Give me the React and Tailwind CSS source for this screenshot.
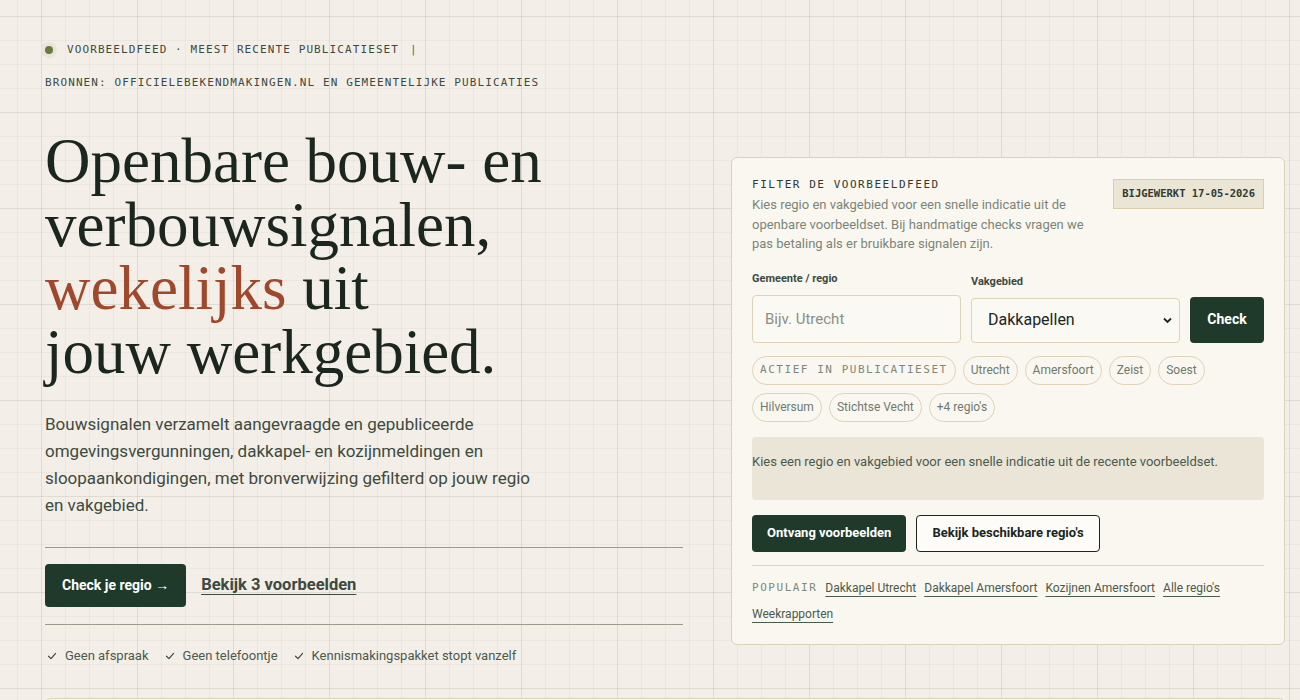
import React from "react";

const mono = "font-['DejaVu_Sans_Mono','Liberation_Mono',monospace]";
const sans = "font-['Roboto','Liberation_Sans',sans-serif]";
const serif = "font-['Liberation_Serif','Times_New_Roman',serif]";

function Check() {
  return (
    <svg width="10" height="10" viewBox="0 0 10 10" className="ml-[2px] shrink-0">
      <path d="M1.5 5.2 L4 7.6 L8.6 2.4" fill="none" stroke="#3b4a3e" strokeWidth="1.2" strokeLinecap="round" strokeLinejoin="round" />
    </svg>
  );
}

function Chip({ children, monoStyle }) {
  return (
    <span
      className={
        "inline-flex h-[29px] items-center rounded-full border border-[#ddd3b8] bg-[#faf7f0] " +
        (monoStyle
          ? `${mono} px-[7px] text-[11px] tracking-[0.14em] text-[#7d877c]`
          : `px-[7px] text-[12px] text-[#6f7a6e]`)
      }
    >
      {children}
    </span>
  );
}

function PopLink({ children }) {
  return (
    <a className="text-[12px] text-[#4a5a4c] underline decoration-[#4a5a4c] underline-offset-[4px]">{children}</a>
  );
}

export default function App() {
  return (
    <div
      className={`${sans} min-h-screen bg-[#f3efe8] bg-[linear-gradient(to_right,rgba(60,50,30,0.07)_1px,transparent_1px),linear-gradient(to_bottom,rgba(60,50,30,0.07)_1px,transparent_1px),linear-gradient(to_right,rgba(60,50,30,0.04)_1px,transparent_1px),linear-gradient(to_bottom,rgba(60,50,30,0.04)_1px,transparent_1px)] bg-[size:96px_96px,96px_96px,24px_24px,24px_24px] bg-[position:41px_16px,41px_16px,41px_16px,41px_16px]`}
    >
      <div className="pl-[45px] pr-[15px] pt-[42px]">
        {/* header */}
        <div className={`${mono} text-[11px] leading-[16px] tracking-[0.1em] text-[#3d4a3f]`}>
          <div className="flex items-center">
            <span className="h-2 w-2 rounded-full bg-[#6b7a3a] ring-4 ring-[#e7e6d8]" />
            <span className="ml-[14px]">VOORBEELDFEED · MEEST RECENTE PUBLICATIESET</span>
            <span className="ml-[11px] text-[#5a665c]">|</span>
          </div>
          <div className="mt-[17px]">BRONNEN: OFFICIELEBEKENDMAKINGEN.NL EN GEMEENTELIJKE PUBLICATIES</div>
        </div>

        {/* hero grid */}
        <div className="mt-[39px] grid grid-cols-[638px_554px] items-start gap-[48px]">
          <div>
            <h1 className={`${serif} text-[63px] font-normal leading-[63.5px] text-[#1a261e]`}>
              Openbare bouw- en
              <br />
              verbouwsignalen,
              <br />
              <span className="text-[#a0482c]">wekelijks</span> uit
              <br />
              jouw werkgebied.
            </h1>
            <p className="mt-[27px] max-w-[500px] text-[17px] leading-[27px] text-[#3d4a3f]">
              Bouwsignalen verzamelt aangevraagde en gepubliceerde omgevingsvergunningen, dakkapel- en kozijnmeldingen en
              sloopaankondigingen, met bronverwijzing gefilterd op jouw regio en vakgebied.
            </p>
            <div className="mt-[28px] flex items-center gap-[15px] border-y border-[#9c9c8c] pb-[17px] pt-[16px]">
              <button className="h-[43px] rounded-[4px] bg-[#1f3a2b] px-[17px] text-[14px] font-bold text-white">
                Check je regio →
              </button>
              <a className="text-[16.5px] font-bold text-[#3d4a3f] underline decoration-[#3d4a3f] underline-offset-[4px]">
                Bekijk 3 voorbeelden
              </a>
            </div>
            <div className="mt-[21px] flex items-center gap-[14px] text-[13px] leading-[20px] text-[#4a5a4c]">
              <span className="flex items-center gap-[8px]"><Check />Geen afspraak</span>
              <span className="flex items-center gap-[8px]"><Check />Geen telefoontje</span>
              <span className="flex items-center gap-[8px]"><Check />Kennismakingspakket stopt vanzelf</span>
            </div>
          </div>

          {/* filter card */}
          <div className="mt-[27px] rounded-[6px] border border-[#ddd3b8] bg-[#faf7f0] px-5 pb-[17px] pt-[19px]">
            <div className="flex items-start justify-between">
              <div className="max-w-[345px]">
                <div className={`${mono} text-[11px] leading-[16px] tracking-[0.14em] text-[#2f3a32]`}>FILTER DE VOORBEELDFEED</div>
                <p className="mt-[2px] text-[13px] leading-[19.5px] text-[#7a8578]">
                  Kies regio en vakgebied voor een snelle indicatie uit de openbare voorbeeldset. Bij handmatige checks vragen we
                  pas betaling als er bruikbare signalen zijn.
                </p>
              </div>
              <span
                className={`${mono} mt-[2px] flex h-[30px] items-center border border-[#d9cfae] bg-[#ebe5d6] px-[8px] text-[10.5px] font-bold text-[#2f3a32]`}
              >
                BIJGEWERKT 17-05-2026
              </span>
            </div>

            <div className="mt-[17px] grid grid-cols-[minmax(0,1fr)_minmax(0,1fr)_74px] items-end gap-[10px]">
              <label className="flex min-w-0 flex-col">
                <span className="mb-2 text-[11px] font-bold leading-[16px] text-[#3d4a3f]">Gemeente / regio</span>
                <input
                  placeholder="Bijv. Utrecht"
                  className="h-[48px] w-full min-w-0 rounded-[4px] border border-[#ddd3b8] bg-[#fbf9f4] px-3 text-[15px] text-[#1a261e] outline-none placeholder:text-[#8a9088]"
                />
              </label>
              <label className="flex min-w-0 flex-col">
                <span className="mb-2 text-[11px] font-bold leading-[16px] text-[#3d4a3f]">Vakgebied</span>
                <div className="relative">
                  <select className="h-[45px] w-full min-w-0 appearance-none rounded-[4px] border border-[#ddd3b8] bg-[#fbf9f4] pl-4 text-[16px] text-[#1a261e] outline-none">
                    <option>Dakkapellen</option>
                  </select>
                  <svg className="pointer-events-none absolute right-[8px] top-[19px]" width="9" height="7" viewBox="0 0 9 7">
                    <path d="M1 1.5 L4.5 5 L8 1.5" fill="none" stroke="#1a261e" strokeWidth="1.8" />
                  </svg>
                </div>
              </label>
              <button className="h-[46px] rounded-[4px] bg-[#1f3a2b] text-[14px] font-bold text-white">Check</button>
            </div>

            <div className="mt-[13px] flex flex-wrap gap-x-[7px] gap-y-2">
              <Chip monoStyle>ACTIEF IN PUBLICATIESET</Chip>
              <Chip>Utrecht</Chip>
              <Chip>Amersfoort</Chip>
              <Chip>Zeist</Chip>
              <Chip>Soest</Chip>
              <Chip>Hilversum</Chip>
              <Chip>Stichtse Vecht</Chip>
              <Chip>+4 regio's</Chip>
            </div>

            <div className="mt-[15px] h-[63px] rounded-[4px] bg-[#ebe5d8] pt-[15px] text-[13px] leading-[20px] text-[#4a5a4c]">
              Kies een regio en vakgebied voor een snelle indicatie uit de recente voorbeeldset.
            </div>

            <div className="mt-[15px] flex gap-[10px]">
              <button className="h-[37px] rounded-[4px] bg-[#1f3a2b] px-[15px] text-[13px] font-bold text-white">Ontvang voorbeelden</button>
              <button className="h-[37px] rounded-[4px] border border-[#1a261e] bg-[#fdfcf8] px-[15px] text-[13px] font-bold text-[#1a261e]">
                Bekijk beschikbare regio's
              </button>
            </div>

            <div className="mt-[13px] flex flex-wrap items-center gap-x-[8px] border-t border-[#d8d5cb] pt-[9px] leading-[26px]">
              <span className={`${mono} text-[11px] tracking-[0.14em] text-[#7d877c]`}>POPULAIR</span>
              <PopLink>Dakkapel Utrecht</PopLink>
              <PopLink>Dakkapel Amersfoort</PopLink>
              <PopLink>Kozijnen Amersfoort</PopLink>
              <PopLink>Alle regio's</PopLink>
              <PopLink>Weekrapporten</PopLink>
            </div>
          </div>
        </div>

        {/* next section card */}
        <div className="mt-[32px] h-[200px] w-[1240px] rounded-t-[6px] border border-[#ddd3b8] bg-[#faf7f0]" />
      </div>
    </div>
  );
}
